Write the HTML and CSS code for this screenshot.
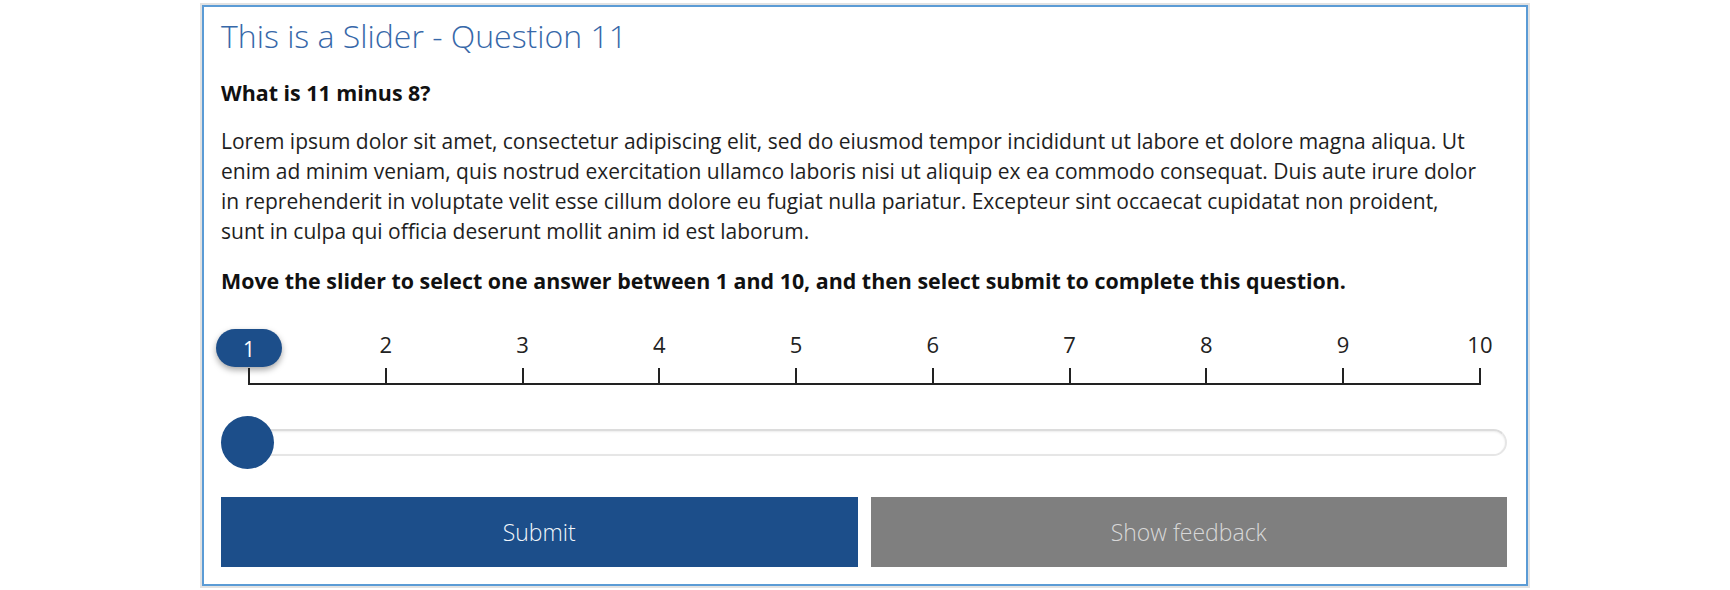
FILE: index.html
```html
<!DOCTYPE html>
<html lang="en">
<head>
<meta charset="utf-8">
<title>This is a Slider - Question 11</title>
<link rel="stylesheet" href="styles.css">
</head>
<body>
<div class="frame">
  <div class="card">
    <h2 class="title">This is a Slider - Question 11</h2>
    <p class="question">What is 11 minus 8?</p>
    <p class="body">Lorem ipsum dolor sit amet, consectetur adipiscing elit, sed do eiusmod tempor incididunt ut labore et dolore magna aliqua. Ut enim ad minim veniam, quis nostrud exercitation ullamco laboris nisi ut aliquip ex ea commodo consequat. Duis aute irure dolor in reprehenderit in voluptate velit esse cillum dolore eu fugiat nulla pariatur. Excepteur sint occaecat cupidatat non proident, sunt in culpa qui officia deserunt mollit anim id est laborum.</p>
    <p class="instruction">Move the slider to select one answer between 1 and 10, and then select submit to complete this question.</p>

    <div class="scale">
      <div class="ticks">
        <div class="tick"><span class="bubble">1</span><span class="mark"></span></div>
        <div class="tick"><span class="num">2</span><span class="mark"></span></div>
        <div class="tick"><span class="num">3</span><span class="mark"></span></div>
        <div class="tick"><span class="num">4</span><span class="mark"></span></div>
        <div class="tick"><span class="num">5</span><span class="mark"></span></div>
        <div class="tick"><span class="num">6</span><span class="mark"></span></div>
        <div class="tick"><span class="num">7</span><span class="mark"></span></div>
        <div class="tick"><span class="num">8</span><span class="mark"></span></div>
        <div class="tick"><span class="num">9</span><span class="mark"></span></div>
        <div class="tick"><span class="num">10</span><span class="mark"></span></div>
      </div>
    </div>

    <div class="slider">
      <div class="track"></div>
      <div class="thumb"></div>
    </div>

    <div class="buttons">
      <button class="btn btn-submit">Submit</button>
      <button class="btn btn-feedback">Show feedback</button>
    </div>
  </div>
</div>
</body>
</html>
```
FILE: styles.css
```css
* { box-sizing: border-box; }

html, body {
  margin: 0;
  padding: 0;
  background: #ffffff;
}

body {
  font-family: "Open Sans", "DejaVu Sans", sans-serif;
  color: #1a1a1a;
  padding-top: 3px;
}

.frame {
  width: 1330px;
  margin: 0 auto;
  border: 2px solid #e2e2e2;
}

.card {
  border: 2px solid #5b9bd5;
  padding: 9px 19px 17px 17px;
}

.title {
  margin: 0 0 22px;
  font-size: 32px;
  line-height: 40px;
  font-weight: 300;
  color: #3768a9;
}

.question,
.body,
.instruction {
  margin: 0 0 18px;
  font-size: 21px;
  line-height: 30px;
}

.body {
  max-width: 1261px;
  margin-bottom: 20px;
  color: #1e1e1e;
}

.question,
.instruction {
  font-weight: 700;
  font-size: 21.4px;
  color: #111111;
}

.scale {
  padding: 15px 26px 0 27px;
}

.ticks {
  display: flex;
  justify-content: space-between;
  border-bottom: 2px solid #222222;
}

.tick {
  width: 2px;
  display: flex;
  flex-direction: column;
  align-items: center;
}

.num {
  height: 39px;
  font-size: 22px;
  line-height: 30px;
  color: #222222;
  white-space: nowrap;
}

.bubble {
  height: 38px;
  width: 66px;
  margin-bottom: 1px;
  border-radius: 19px;
  background: #1c4e8a;
  color: #ffffff;
  font-size: 21px;
  line-height: 40px;
  text-align: center;
  flex-shrink: 0;
  box-shadow: 0 3px 6px rgba(0, 0, 0, 0.35);
}

.mark {
  width: 2px;
  height: 15px;
  background: #222222;
}

.slider {
  position: relative;
  height: 53px;
  margin-top: 31px;
  display: flex;
  align-items: center;
}

.track {
  flex: 1;
  height: 27px;
  border-radius: 14px;
  border: 2px solid #e6e6e6;
  border-top-color: #dcdcdc;
  background: #ffffff;
  box-shadow: inset 0 1px 2px rgba(0, 0, 0, 0.08);
}

.thumb {
  position: absolute;
  left: 0;
  top: 0;
  width: 53px;
  height: 53px;
  border-radius: 50%;
  background: #1c4e8a;
}

.buttons {
  display: grid;
  grid-template-columns: 1fr 1fr;
  column-gap: 13px;
  margin-top: 28px;
}

.btn {
  height: 70px;
  border: none;
  font-family: "Open Sans", "DejaVu Sans", sans-serif;
  font-size: 23px;
  font-weight: 300;
  padding: 0;
}

.btn-submit {
  background: #1c4e8a;
  color: #f2f6fb;
}

.btn-feedback {
  background: #7f7f7f;
  color: #d8d8d8;
}
```
